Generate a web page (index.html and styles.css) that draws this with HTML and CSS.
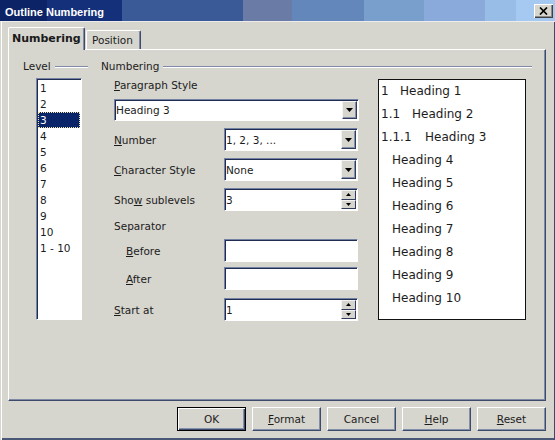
FILE: index.html
```html
<!DOCTYPE html>
<html>
<head>
<meta charset="utf-8">
<title>Outline Numbering</title>
<link rel="stylesheet" href="styles.css">
</head>
<body>
<div class="titlebar">
  <span class="title">Outline Numbering</span>
  <span class="close"><svg width="9" height="8" viewBox="0 0 9 8"><path d="M1 0.5 L8 7.5 M8 0.5 L1 7.5" stroke="#000" stroke-width="1.7" fill="none"/></svg></span>
</div>
<div class="frame">
  <div class="tabs">
    <div class="tab active">Numbering</div>
    <div class="tab">Position</div>
  </div>
  <div class="panel">
    <div class="level-col">
      <div class="group-head"><span>Level</span><i class="rule"></i></div>
      <ul class="level-list">
        <li>1</li>
        <li>2</li>
        <li class="sel">3</li>
        <li>4</li>
        <li>5</li>
        <li>6</li>
        <li>7</li>
        <li>8</li>
        <li>9</li>
        <li>10</li>
        <li>1 - 10</li>
      </ul>
    </div>
    <div class="num-col">
      <div class="group-head"><span>Numbering</span><i class="rule"></i></div>
      <div class="num-body">
        <div class="form">
          <div class="label-top"><u>P</u>aragraph Style</div>
          <div class="field combo wide">
            <span class="field-text">Heading 3</span>
            <span class="drop-btn"><svg width="7" height="4" viewBox="0 0 7 4"><polygon points="0,0 7,0 3.5,4" fill="#000"/></svg></span>
          </div>
          <div class="row">
            <span class="lbl"><u>N</u>umber</span>
            <div class="field combo">
              <span class="field-text">1, 2, 3, ...</span>
              <span class="drop-btn"><svg width="7" height="4" viewBox="0 0 7 4"><polygon points="0,0 7,0 3.5,4" fill="#000"/></svg></span>
            </div>
          </div>
          <div class="row">
            <span class="lbl"><u>C</u>haracter Style</span>
            <div class="field combo">
              <span class="field-text">None</span>
              <span class="drop-btn"><svg width="7" height="4" viewBox="0 0 7 4"><polygon points="0,0 7,0 3.5,4" fill="#000"/></svg></span>
            </div>
          </div>
          <div class="row">
            <span class="lbl">Sho<u>w</u> sublevels</span>
            <div class="field spin">
              <span class="field-text">3</span>
              <span class="spin-btns">
                <span class="spin-btn"><svg width="5" height="3" viewBox="0 0 5 3"><polygon points="0,3 5,3 2.5,0" fill="#000"/></svg></span>
                <span class="spin-btn"><svg width="5" height="3" viewBox="0 0 5 3"><polygon points="0,0 5,0 2.5,3" fill="#000"/></svg></span>
              </span>
            </div>
          </div>
          <div class="label-top sep">Separator</div>
          <div class="row before">
            <span class="lbl indent"><u>B</u>efore</span>
            <div class="field"></div>
          </div>
          <div class="row after">
            <span class="lbl indent"><u>A</u>fter</span>
            <div class="field"></div>
          </div>
          <div class="row start">
            <span class="lbl"><u>S</u>tart at</span>
            <div class="field spin">
              <span class="field-text">1</span>
              <span class="spin-btns">
                <span class="spin-btn"><svg width="5" height="3" viewBox="0 0 5 3"><polygon points="0,3 5,3 2.5,0" fill="#000"/></svg></span>
                <span class="spin-btn"><svg width="5" height="3" viewBox="0 0 5 3"><polygon points="0,0 5,0 2.5,3" fill="#000"/></svg></span>
              </span>
            </div>
          </div>
        </div>
        <div class="preview">
          <div class="pline"><span class="n1">1</span>Heading 1</div>
          <div class="pline"><span class="n2">1.1</span>Heading 2</div>
          <div class="pline"><span class="n3">1.1.1</span>Heading 3</div>
          <div class="pline plain">Heading 4</div>
          <div class="pline plain">Heading 5</div>
          <div class="pline plain">Heading 6</div>
          <div class="pline plain">Heading 7</div>
          <div class="pline plain">Heading 8</div>
          <div class="pline plain">Heading 9</div>
          <div class="pline plain">Heading 10</div>
        </div>
      </div>
    </div>
  </div>
  <div class="buttons">
    <div class="btn default">OK</div>
    <div class="btn"><u>F</u>ormat</div>
    <div class="btn">Cancel</div>
    <div class="btn"><u>H</u>elp</div>
    <div class="btn"><u>R</u>eset</div>
  </div>
</div>
</body>
</html>
```
FILE: styles.css
```css
* { box-sizing: border-box; }
html, body { margin: 0; padding: 0; }
body {
  width: 555px;
  height: 440px;
  overflow: hidden;
  background: #d6d5ce;
  font-family: "DejaVu Sans", sans-serif;
  font-size: 10.5px;
  color: #1c1c1c;
}
u { text-decoration: underline; text-underline-offset: 1px; }

.titlebar {
  height: 21px;
  display: flex;
  justify-content: space-between;
  align-items: flex-start;
  background: linear-gradient(to right,
    #0c2466 0, #0c2466 47px,
    #14307a 47px, #14307a 122px,
    #3a5a97 122px, #3a5a97 243px,
    #6a7ca6 243px, #6a7ca6 292px,
    #6487bb 292px, #6487bb 364px,
    #79a0cc 364px, #79a0cc 424px,
    #8aaadc 424px, #8aaadc 485px,
    #98bde7 485px, #98bde7 516px,
    #a5c9f0 516px);
}
.title {
  font-family: "Liberation Sans", Arial, sans-serif;
  font-weight: bold;
  font-size: 11px;
  color: #fff;
  padding: 3px 0 0 5px;
  line-height: 18px;
}
.close {
  margin: 4px 2px 0 0;
  width: 19px;
  height: 14px;
  background: #d6d5ce;
  display: flex;
  align-items: center;
  justify-content: center;
  box-shadow: inset 1px 1px #fff, inset -1px -1px #404040, inset -2px -2px #8a8a8a;
}

.frame {
  height: 419px;
  border-top: 1px solid #ececec;
  padding: 5px 9px 0 8px;
  display: flex;
  flex-direction: column;
  box-shadow: inset 1px 0 #d6d5ce, inset 2px 0 #fff, inset -1px 0 #3d4a6a, inset 0 -2px #4a5878;
}

.tabs {
  display: flex;
  align-items: flex-end;
  height: 23px;
  margin-bottom: -1px;
}
.tab {
  height: 20px;
  width: 55px;
  margin-left: 1px;
  line-height: 18px;
  padding-left: 5px;
  border-top: 1px solid #fff;
  border-left: 1px solid #fff;
  border-right: 1px solid #3d4a6a;
  box-shadow: inset -1px 0 #7e8aa8;
  border-radius: 2px 2px 0 0;
  background: #d6d5ce;
}
.tab.active {
  position: relative;
  z-index: 1;
  margin-left: 0;
  width: 77px;
  height: 23px;
  padding: 1px 0 0 3px;
  line-height: 20px;
  font-size: 11px;
  font-weight: bold;
  color: #1a1a1a;
}

.panel {
  height: 352px;
  display: flex;
  padding: 10px 0 0 14px;
  border-top: 1px solid #fff;
  border-left: 1px solid #fff;
  border-right: 1px solid #3d4a6a;
  border-bottom: 1px solid #3d4a6a;
  box-shadow: inset -1px -1px #7e8aa6;
}

.group-head {
  display: flex;
  align-items: center;
  height: 13px;
  line-height: 13px;
}
.rule {
  flex: 1;
  height: 2px;
  margin-left: 4px;
  border-top: 1px solid #7e8aa8;
  border-bottom: 1px solid #fff;
}

.level-col { width: 65px; }
.level-list {
  list-style: none;
  margin: 5px 0 0 13px;
  padding: 1px;
  width: 46px;
  height: 242px;
  background: #fff;
  border: 1px solid;
  border-color: #7482a4 #fff #fff #7482a4;
  box-shadow: inset 1px 1px #1f2d52;
}
.level-list li {
  height: 16px;
  line-height: 16px;
  padding-left: 2px;
}
.level-list li.sel {
  background: #0a246a;
  color: #fff;
  outline: 1px dotted #f2e6a6;
  outline-offset: -1px;
}

.num-col { width: 431px; margin-left: 13px; }
.num-body { display: flex; margin-top: 5px; }
.form { width: 245px; margin-left: 13px; }
.label-top { line-height: 14px; }
.label-top.sep { margin-top: 8px; }

.field {
  display: flex;
  align-items: center;
  height: 23px;
  width: 134px;
  background: #fff;
  border: 1px solid;
  border-color: #7482a4 #fff #fff #7482a4;
  box-shadow: inset 1px 1px #1f2d52;
}
.field.wide { width: 245px; height: 22px; margin-top: 7px; }
.field-text { flex: 1; padding-left: 1px; white-space: nowrap; }

.drop-btn {
  align-self: stretch;
  width: 15px;
  margin: 1px 1px 1px 0;
  display: flex;
  align-items: center;
  justify-content: center;
  background: #d6d5ce;
  border: 1px solid;
  border-color: #f4f4f4 #2f3c5e #2f3c5e #f4f4f4;
  box-shadow: inset -1px -1px #8791ac;
}
.spin-btns {
  align-self: stretch;
  width: 15px;
  margin: 1px 1px 1px 0;
  display: flex;
  flex-direction: column;
}
.spin-btn {
  flex: 1;
  display: flex;
  align-items: center;
  justify-content: center;
  background: #d6d5ce;
  border: 1px solid;
  border-color: #f4f4f4 #2f3c5e #2f3c5e #f4f4f4;
}

.row {
  display: flex;
  align-items: center;
  height: 23px;
  margin-top: 7px;
}
.row.before { margin-top: 6px; }
.row.after { margin-top: 5px; }
.row.start { margin-top: 8px; }
.lbl { width: 110px; padding-top: 1px; white-space: nowrap; }
.lbl.indent { padding-left: 12px; }

.preview {
  width: 148px;
  height: 241px;
  margin: 1px 0 0 19px;
  padding-left: 2px;
  background: #fff;
  border: 1px solid #111;
  font-size: 12px;
}
.pline { height: 23px; line-height: 23px; white-space: nowrap; }
.pline span { display: inline-block; }
.n1 { width: 19px; }
.n2 { width: 31px; }
.n3 { width: 44px; }
.pline.plain { padding-left: 11px; }

.buttons {
  display: flex;
  justify-content: flex-end;
  gap: 6px;
  margin-top: 6px;
}
.btn {
  width: 69px;
  height: 24px;
  line-height: 22px;
  text-align: center;
  background: #d6d5ce;
  border: 1px solid;
  border-color: #fff #3d4a6a #3d4a6a #fff;
  box-shadow: inset -1px -1px #8390ac;
}
.btn.default {
  border-color: #000;
  box-shadow: inset 1px 1px #fff, inset -1px -1px #3d4a6a, inset -2px -2px #8390ac;
}
```
